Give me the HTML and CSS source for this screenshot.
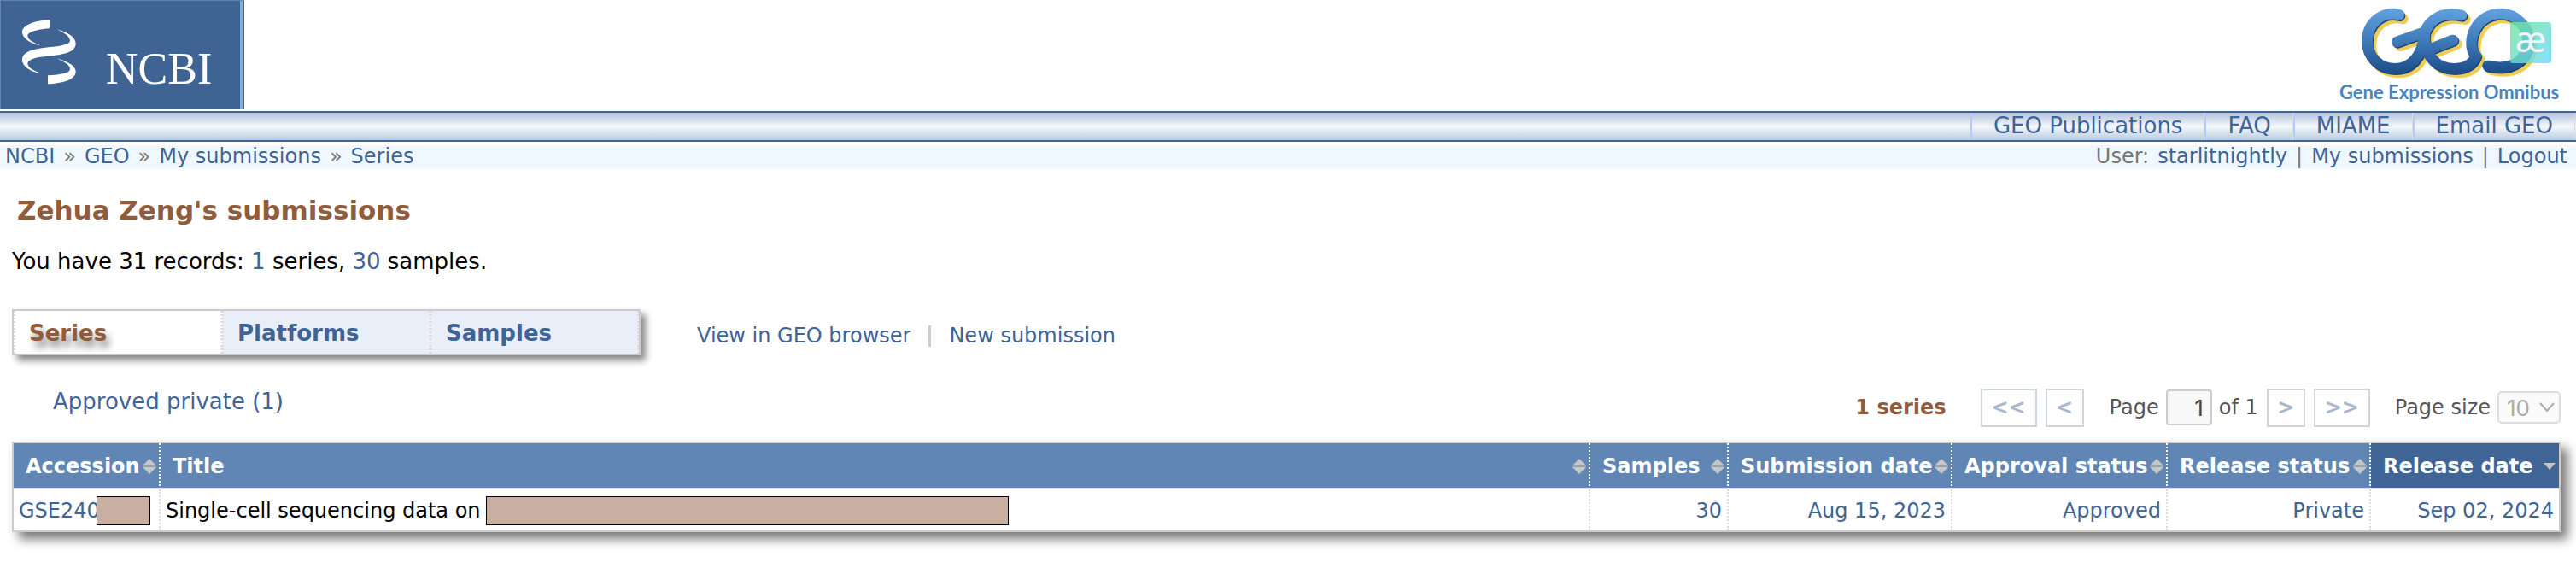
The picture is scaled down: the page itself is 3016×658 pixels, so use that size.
FILE: index.html
```html
<!DOCTYPE html>
<html lang="en">
<head>
<meta charset="utf-8">
<title>My submissions - Series - GEO - NCBI</title>
<link rel="stylesheet" href="styles.css">
</head>
<body>
<header class="masthead">
  <a class="ncbi" href="#" aria-label="NCBI">
    <svg width="285" height="127" viewBox="1 1 285 127">
      <g transform="scale(.3333)" fill="#fff">
        <path d="M174 70V100C140 102 97 112 97 125C97 140 120 150 143 160C110 155 78 135 78 112C78 90 120 72 174 70Z"/>
        <path d="M200 103C240 115 266 130 266 153C266 185 220 192 170 197C130 200 97 208 97 222C97 238 120 248 143 258C110 253 78 235 78 210C78 180 120 172 170 166C215 162 246 155 246 143C246 128 225 115 200 103Z"/>
        <path d="M200 205C240 217 266 232 266 252C266 280 220 293 168 295V265C215 263 246 256 246 243C246 228 225 217 200 205Z"/>
      </g>
      <text class="ncbi-word" x="124" y="98">NCBI</text>
    </svg>
  </a>
  <a class="geo" href="#" aria-label="Gene Expression Omnibus">
    <svg width="316" height="128" viewBox="0 0 316 128">
      <defs>
        <linearGradient id="blue" gradientUnits="userSpaceOnUse" x1="0" y1="28" x2="0" y2="262">
          <stop offset="0" stop-color="#62a3df"/><stop offset=".5" stop-color="#3f79b8"/><stop offset="1" stop-color="#1b4a88"/>
        </linearGradient>
        <linearGradient id="badge" x1="0" y1="0" x2="1" y2="1">
          <stop offset="0" stop-color="#6fe69a"/><stop offset="1" stop-color="#6fd8ff"/>
        </linearGradient>
        <g id="geo-strokes" fill="none" stroke-width="38" stroke-linecap="round" stroke-linejoin="round">
          <path d="M323 52C262 36 212 84 212 145C212 200 255 241 308 241C370 241 402 190 410 130C415 85 455 36 540 54"/>
          <path d="M316 147L412 112"/>
          <path d="M410 130C415 200 455 241 515 241C555 241 580 222 590 197C566 170 574 125 588 100C606 66 640 48 675 48C730 48 770 92 770 145C770 205 722 252 631 231"/>
          <path d="M432 172L510 141"/>
        </g>
      </defs>
      <g transform="scale(.337 .3333)">
        <use href="#geo-strokes" x="13" y="14" stroke="#f0cc52"/>
        <use href="#geo-strokes" x="3" y="4" stroke="#1d4478"/>
        <use href="#geo-strokes" stroke="url(#blue)"/>
      </g>
      <text class="geo-word" x="39" y="116">Gene Expression Omnibus</text>
      <rect x="239" y="26" width="48" height="48" rx="3" fill="url(#badge)" opacity=".82"/>
      <text class="badge-word" x="263" y="61" text-anchor="middle">æ</text>
    </svg>
  </a>
</header>

<nav class="topnav">
  <a href="#">GEO Publications</a>
  <a href="#">FAQ</a>
  <a href="#">MIAME</a>
  <a href="#">Email GEO</a>
</nav>

<div class="crumbs">
  <div class="path"><a href="#">NCBI</a><span>»</span><a href="#">GEO</a><span>»</span><a href="#">My submissions</a><span>»</span><a href="#">Series</a></div>
  <div class="user"><span>User:</span><a href="#">starlitnightly</a><span>|</span><a href="#">My submissions</a><span>|</span><a href="#">Logout</a></div>
</div>

<main class="content">
  <h1>Zehua Zeng's submissions</h1>
  <p class="summary">You have 31 records: <a href="#">1</a> series, <a href="#">30</a> samples.</p>

  <div class="tabrow">
    <nav class="tabs">
      <a class="tab active" href="#">Series</a>
      <a class="tab" href="#">Platforms</a>
      <a class="tab" href="#">Samples</a>
    </nav>
    <div class="actions">
      <a href="#">View in GEO browser</a>
      <span class="bar"></span>
      <a href="#">New submission</a>
    </div>
  </div>

  <div class="toolbar">
    <a class="filter" href="#">Approved private (1)</a>
    <div class="pager">
      <strong>1 series</strong>
      <div class="pages">
        <button type="button" class="wide">&lt;&lt;</button>
        <button type="button">&lt;</button>
        <label for="page">Page</label>
        <input id="page" type="text" value="1">
        <span class="total">of 1</span>
        <button type="button">&gt;</button>
        <button type="button" class="wide">&gt;&gt;</button>
      </div>
      <div class="size">
        <label for="size">Page size</label>
        <span class="select">
          <select id="size" disabled><option>10</option></select>
          <svg width="18" height="12" viewBox="0 0 18 12"><path d="M1 1L9 10L17 1" fill="none" stroke="#aaa" stroke-width="2"/></svg>
        </span>
      </div>
    </div>
  </div>

  <svg width="0" height="0" class="defs"><defs>
    <symbol id="sort" viewBox="0 0 16 18"><path d="M8 0L16 8H0ZM0 10H16L8 18Z" fill="#c6c6c6"/><path d="M0 8H16V10H0Z" fill="#8fa3bd"/></symbol>
    <symbol id="desc" viewBox="0 0 16 18"><path d="M1 5H15L8 13Z" fill="#c6c6c6"/></symbol>
  </defs></svg>

  <table class="grid">
    <colgroup><col class="c-acc"><col><col class="c-samples"><col class="c-sub"><col class="c-appr"><col class="c-rel"><col class="c-date"></colgroup>
    <thead>
      <tr>
        <th><div class="head">Accession<svg class="sort"><use href="#sort"/></svg></div></th>
        <th><div class="head">Title<svg class="sort"><use href="#sort"/></svg></div></th>
        <th><div class="head">Samples<svg class="sort"><use href="#sort"/></svg></div></th>
        <th><div class="head">Submission date<svg class="sort"><use href="#sort"/></svg></div></th>
        <th><div class="head">Approval status<svg class="sort"><use href="#sort"/></svg></div></th>
        <th><div class="head">Release status<svg class="sort"><use href="#sort"/></svg></div></th>
        <th class="sorted"><div class="head">Release date<svg class="sort"><use href="#desc"/></svg></div></th>
      </tr>
    </thead>
    <tbody>
      <tr>
        <td><div class="cell"><a class="acc" href="#">GSE240</a><span class="mask short"></span></div></td>
        <td><div class="cell">Single-cell sequencing data on<span class="mask long"></span></div></td>
        <td class="num"><a href="#">30</a></td>
        <td class="num"><a href="#">Aug 15, 2023</a></td>
        <td class="num"><a href="#">Approved</a></td>
        <td class="num"><a href="#">Private</a></td>
        <td class="num"><a href="#">Sep 02, 2024</a></td>
      </tr>
    </tbody>
  </table>
</main>
</body>
</html>
```

FILE: styles.css
```css
* { box-sizing: border-box; }

body {
  margin: 0;
  background: #fff;
  color: #000;
  font: 24px/28px Verdana, "DejaVu Sans", sans-serif;
}

a { color: #3f6496; text-decoration: none; }
svg { display: block; }

.masthead { display: flex; justify-content: space-between; height: 130px; }
.ncbi {
  height: 128px;
  background: linear-gradient(90deg, transparent 280px, #8fabcb 280px, #8fabcb 283px, transparent 283px), #3f6494;
  border-top: 1px solid #6483aa;
  border-left: 1px solid #6483aa;
}
.ncbi-word { font: 52px "Liberation Serif", serif; fill: #fff; }
.geo-word { font: bold 22px Lato, sans-serif; fill: #4a84bd; }
.badge-word { font: 42px "Noto Sans", sans-serif; fill: #f1f4fb; }

.topnav {
  display: flex;
  justify-content: flex-end;
  height: 36px;
  padding-right: 1px;
  border-top: 2px solid #3f6496;
  border-bottom: 2px solid #3f6496;
  background: linear-gradient(#b1c1dc, #f5f8fb 50%, #b9cbdf);
  font-size: 26px;
  line-height: 30px;
}
.topnav a { padding: 0 25px; border-left: 2px solid #b3cbff; border-right: 1px solid #ddd; }

.crumbs {
  display: flex;
  justify-content: space-between;
  margin-top: 4px;
  padding: 0 10px 2px 6px;
  background: #f0f8ff;
  color: #777;
  line-height: 26px;
}
.path, .user { display: flex; gap: 10px; }

.content { padding: 0 18px 36px 14px; }
h1 { margin: 28px 0 0 6px; font-size: 31px; line-height: 40px; color: #915c3c; }
.summary { margin: 24px 0 0; font-size: 26px; line-height: 32px; }

.tabrow { display: flex; align-items: center; margin-top: 40px; }
.tabs { display: flex; border: 2px solid #ccc; box-shadow: 6px 6px 8px #888; font-size: 26px; font-weight: bold; line-height: 48px; }
.tab { width: 244px; padding: 2px 0 0 16px; background: #eaeef8; border-left: 2px dotted #ddd; border-right: 2px dotted #ddd; }
.tab.active { background: #fff; color: #915c3c; text-shadow: 4px 8px 8px #888; }
.actions { display: flex; align-items: center; gap: 21px; margin-left: 66px; padding-top: 8px; }
.bar { width: 3px; height: 25px; background: #ccc; }

.toolbar { display: flex; justify-content: space-between; align-items: flex-start; margin-top: 38px; height: 63px; }
.filter { margin-left: 48px; font-size: 26px; line-height: 32px; }
.pager { display: flex; align-items: center; gap: 40px; color: #555; height: 46px; }
.pager strong { color: #915c3c; }
.pages { display: flex; align-items: center; gap: 10px; }
.pages button {
  width: 45px;
  height: 45px;
  padding: 0;
  border: 2px solid #cfd6de;
  background: #fff;
  color: #a9b8cd;
  font: bold 24px Verdana, "DejaVu Sans", sans-serif;
}
.pages .wide { width: 66px; }
.pages label { margin: 0 -2px 0 20px; }
.pages input {
  width: 54px;
  height: 42px;
  padding: 0 8px 0 0;
  border: 2px solid #ccc;
  border-radius: 4px;
  background: #f8f8f8;
  color: #444;
  font: 26px Inter, sans-serif;
  text-align: right;
}
.pages .total { margin-left: -2px; }
.size { display: flex; align-items: center; gap: 8px; margin-left: -11px; }
.select { position: relative; }
.select svg { position: absolute; right: 7px; top: 13px; }
.size select {
  display: block;
  appearance: none;
  width: 74px;
  height: 38px;
  padding: 0 9px;
  border: 2px solid #ddd;
  border-radius: 5px;
  background: #fafafa;
  color: #aaa;
  opacity: 1;
  font: 26px Inter, sans-serif;
}

.defs { position: absolute; }
.grid {
  width: 100%;
  table-layout: fixed;
  border: 2px solid #ccc;
  border-collapse: separate;
  border-spacing: 0;
  box-shadow: 8px 8px 12px #777;
}
.c-acc { width: 172px; }
.c-samples { width: 162px; }
.c-sub { width: 262px; }
.c-appr { width: 252px; }
.c-rel { width: 238px; }
.c-date { width: 220px; }

.grid th {
  height: 54px;
  padding: 1px 3px 0 14px;
  border-bottom: 2px solid #ddd;
  border-right: 2px dotted #fff;
  background: #6086b6;
  color: #fff;
  text-align: left;
  white-space: nowrap;
}
.grid .sorted { background: #3f6496; }
.head { display: flex; justify-content: space-between; align-items: center; }
.sort { flex: none; width: 16px; height: 18px; }
.grid td { height: 48px; padding: 1px 6px 0; border-right: 2px dotted #ddd; background: #fff; white-space: nowrap; }
.grid th:last-child, .grid td:last-child { border-right: 0; }
.grid .num { text-align: right; }
.cell { display: flex; align-items: center; }
.acc { flex: none; }
.mask { height: 34px; border: 1px solid #000; background: #c9afa2; }
.mask.short { position: relative; width: 63px; margin-left: -4px; }
.mask.long { width: 612px; margin-left: 6px; }
```
